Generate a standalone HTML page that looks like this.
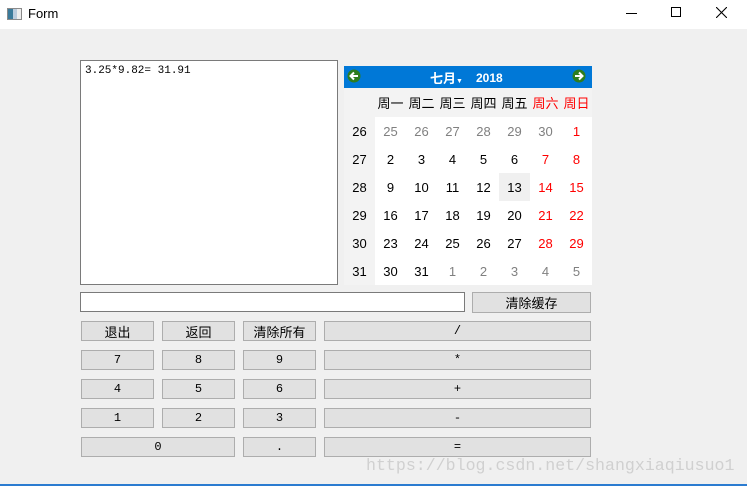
<!DOCTYPE html>
<html><head><meta charset="utf-8"><style>
*{margin:0;padding:0;box-sizing:border-box}
body{width:747px;height:486px;background:#f0f0f0;position:relative;overflow:hidden;font-family:"Liberation Sans","Noto Sans CJK SC",sans-serif;}
.a{position:absolute}
.title{left:0;top:0;width:747px;height:29px;background:#fff}
.btn{position:absolute;background:#e1e1e1;border:1px solid #adadad;font-size:12px;color:#000;display:flex;align-items:center;justify-content:center;font-family:"Liberation Mono","WenQuanYi Zen Hei",monospace}
.cn{font-family:"Liberation Sans","Noto Sans CJK SC",sans-serif;font-size:13px}
.cal td{width:31px;height:28px;text-align:center;font-size:13px;padding:0}
</style></head><body>
<div class="a title"></div>
<div class="a" style="left:7px;top:8px;width:15px;height:12px;border:1px solid #8a8a8a;background:linear-gradient(90deg,#3a7a9a 0 40%,#bcd 40% 70%,#eee 70%)"></div>
<div class="a" style="left:28px;top:6px;font-size:13px;color:#000">Form</div>
<div class="a" style="left:626px;top:13px;width:11px;height:1px;background:#000"></div>
<div class="a" style="left:671px;top:7px;width:10px;height:10px;border:1px solid #000"></div>
<svg class="a" style="left:716px;top:7px" width="11" height="11"><path d="M0 0L11 11M11 0L0 11" stroke="#000" stroke-width="1.1"/></svg>

<div class="a" style="left:80px;top:60px;width:258px;height:225px;background:#fff;border:1px solid #7a7a7a"></div>
<div class="a" style="left:85px;top:65px;font-family:'Liberation Mono',monospace;font-size:11px">3.25*9.82= 31.91</div>

<div class="a" style="left:344px;top:66px;width:248px;height:22px;background:#0078d7"></div>
<svg class="a" style="left:347px;top:69px" width="14" height="14"><circle cx="7" cy="7" r="6.5" fill="#2e7d1e"/><path d="M11 7H4M7 3.5L3.5 7L7 10.5" stroke="#fff" stroke-width="2" fill="none"/></svg>
<svg class="a" style="left:572px;top:69px" width="14" height="14"><circle cx="7" cy="7" r="6.5" fill="#2e7d1e"/><path d="M3 7H10M7 3.5L10.5 7L7 10.5" stroke="#fff" stroke-width="2" fill="none"/></svg>
<div class="a" style="left:430px;top:68px;color:#fff;font-weight:bold;font-size:13px">七月<span style="font-size:7px">▼</span></div>
<div class="a" style="left:476px;top:71px;color:#fff;font-weight:bold;font-size:12px">2018</div>
<div class="a" style="left:344px;top:88px;width:248px;height:197px;background:#f3f3f3"></div>
<div class="a" style="left:375px;top:117px;width:217px;height:168px;background:#fff"></div>
<div class="a" style="left:499px;top:173px;width:31px;height:28px;background:#f0f0f0"></div>
<table class="a cal" style="left:344px;top:88px;border-collapse:collapse">
<tr style="height:29px"><td></td><td>周一</td><td>周二</td><td>周三</td><td>周四</td><td>周五</td><td style="color:red">周六</td><td style="color:red">周日</td></tr>
<tr><td>26</td><td style="color:#808080">25</td><td style="color:#808080">26</td><td style="color:#808080">27</td><td style="color:#808080">28</td><td style="color:#808080">29</td><td style="color:#808080">30</td><td style="color:red">1</td></tr>
<tr><td>27</td><td>2</td><td>3</td><td>4</td><td>5</td><td>6</td><td style="color:red">7</td><td style="color:red">8</td></tr>
<tr><td>28</td><td>9</td><td>10</td><td>11</td><td>12</td><td>13</td><td style="color:red">14</td><td style="color:red">15</td></tr>
<tr><td>29</td><td>16</td><td>17</td><td>18</td><td>19</td><td>20</td><td style="color:red">21</td><td style="color:red">22</td></tr>
<tr><td>30</td><td>23</td><td>24</td><td>25</td><td>26</td><td>27</td><td style="color:red">28</td><td style="color:red">29</td></tr>
<tr><td>31</td><td>30</td><td>31</td><td style="color:#808080">1</td><td style="color:#808080">2</td><td style="color:#808080">3</td><td style="color:#808080">4</td><td style="color:#808080">5</td></tr>
</table>

<div class="a" style="left:80px;top:292px;width:385px;height:20px;background:#fff;border:1px solid #7a7a7a"></div>
<div class="btn cn" style="left:472px;top:292px;width:119px;height:21px">清除缓存</div>

<div class="btn cn" style="left:81px;top:321px;width:73px;height:20px">退出</div>
<div class="btn cn" style="left:162px;top:321px;width:73px;height:20px">返回</div>
<div class="btn cn" style="left:243px;top:321px;width:73px;height:20px">清除所有</div>
<div class="btn" style="left:324px;top:321px;width:267px;height:20px">/</div>

<div class="btn" style="left:81px;top:350px;width:73px;height:20px">7</div>
<div class="btn" style="left:162px;top:350px;width:73px;height:20px">8</div>
<div class="btn" style="left:243px;top:350px;width:73px;height:20px">9</div>
<div class="btn" style="left:324px;top:350px;width:267px;height:20px">*</div>

<div class="btn" style="left:81px;top:379px;width:73px;height:20px">4</div>
<div class="btn" style="left:162px;top:379px;width:73px;height:20px">5</div>
<div class="btn" style="left:243px;top:379px;width:73px;height:20px">6</div>
<div class="btn" style="left:324px;top:379px;width:267px;height:20px">+</div>

<div class="btn" style="left:81px;top:408px;width:73px;height:20px">1</div>
<div class="btn" style="left:162px;top:408px;width:73px;height:20px">2</div>
<div class="btn" style="left:243px;top:408px;width:73px;height:20px">3</div>
<div class="btn" style="left:324px;top:408px;width:267px;height:20px">-</div>

<div class="btn" style="left:81px;top:437px;width:154px;height:20px">0</div>
<div class="btn" style="left:243px;top:437px;width:73px;height:20px">.</div>
<div class="btn" style="left:324px;top:437px;width:267px;height:20px">=</div>

<div class="a" style="left:366px;top:456px;font-family:'Liberation Mono',monospace;font-size:16.6px;color:#d0d0d0;white-space:nowrap">https://blog.csdn.net/shangxiaqiusuo1</div>
<div class="a" style="left:0;top:484px;width:747px;height:2px;background:#2b7bd0"></div>
</body></html>
